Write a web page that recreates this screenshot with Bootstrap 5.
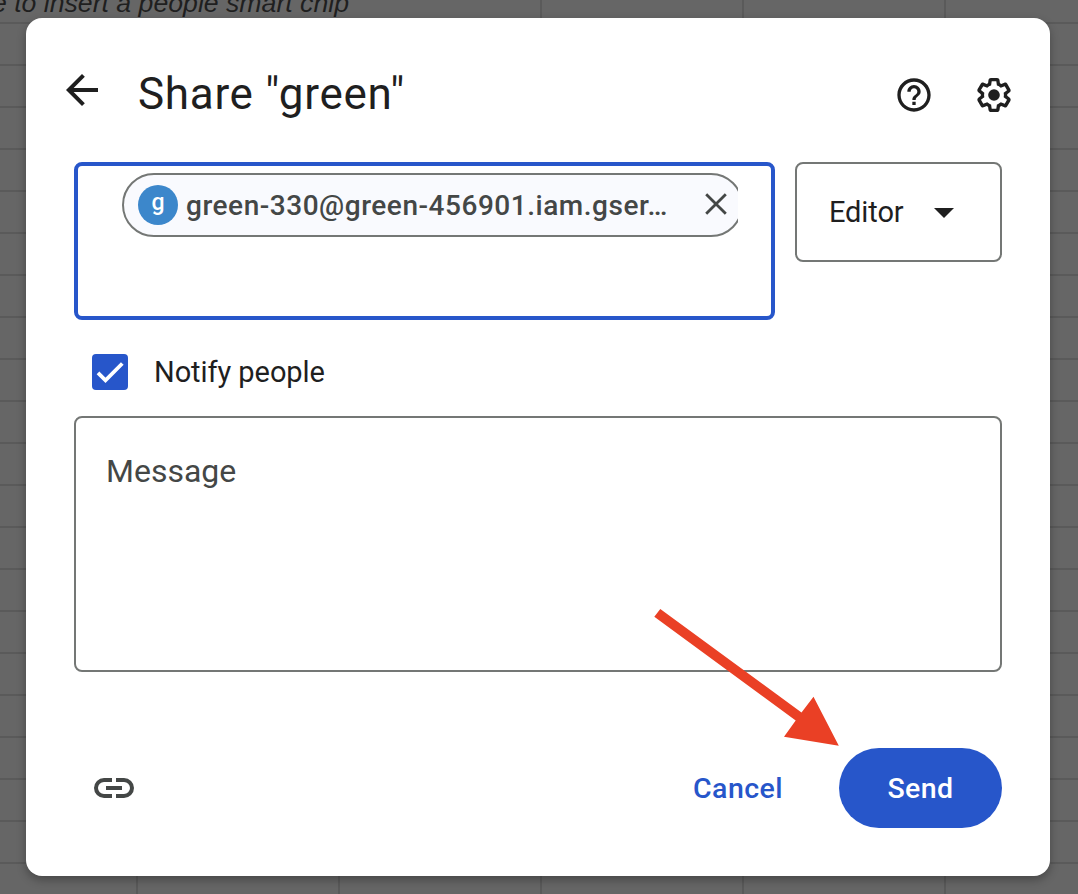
<!DOCTYPE html>
<html lang="en">
<head>
<meta charset="utf-8">
<meta name="viewport" content="width=device-width, initial-scale=1">
<title>Share "green"</title>
<link href="https://cdn.jsdelivr.net/npm/bootstrap@5.3.0/dist/css/bootstrap.min.css" rel="stylesheet">
<style>
  body { width: 1078px; height: 894px; overflow: hidden; background: #666; font-family: Roboto, "Liberation Sans", sans-serif; color: #1f1f1f; }
  svg { display: block; flex: none; }
  /* dimmed spreadsheet behind the dialog */
  .sheet {
    inset: 0;
    background-image:
      linear-gradient(#666, #666),
      linear-gradient(90deg, #5a5a5a 2px, transparent 2px),
      linear-gradient(180deg, #5a5a5a 2px, transparent 2px);
    background-size: 500px 22px, 202px 100%, 100% 42px;
    background-repeat: no-repeat, repeat, repeat;
    background-position: 0 0, 136px 0, 0 22px;
  }
  .cell-note { width: 349px; font: italic 26.67px/30px "Liberation Sans", Arial, sans-serif; color: #1f1f1f; margin-top: -12px; white-space: nowrap; }
  .share-dialog { width: 1024px; height: 858px; margin: 18px 0 0 26px; border-radius: 16px; box-shadow: 0 4px 10px rgba(0,0,0,.3); padding: 0 48px; }
  .share-head { height: 144px; margin: 0 -12px 0 -16px; }
  .share-title { font-size: 44px; line-height: 56px; font-weight: 400; letter-spacing: .7px; margin: 7px 0 0 32px; }
  .head-icons { gap: 40px; margin-top: 10px; }
  .people-box { width: 701px; height: 158px; border: 4px solid #2756ca; border-radius: 8px; padding: 7px 33px 0 44px; }
  .chip-clip { width: 616px; overflow: hidden; }
  .chip { width: 621px; height: 64px; border: 2px solid #747775; border-radius: 32px; background: #f9fafe; padding-left: 14px; color: #444746; font-size: 28px; font-weight: 500; }
  .avatar-dot { width: 40px; height: 40px; background: #3c87cb; font-size: 23px; line-height: 36px; font-weight: 500; }
  .chip-mail { margin: 2px 0 0 8px; width: 510px; letter-spacing: .53px; white-space: nowrap; }
  .role-box { width: 207px; height: 100px; border: 2px solid #747775; border-radius: 8px; padding-left: 32px; font-size: 29px; }
  .role-name { letter-spacing: -.1px; margin: 2px 30px 0 0; }
  .role-caret { margin-top: 2px; }
  .notify { height: 36px; margin: 34px 0 26px 18px; font-size: 29px; }
  .notify-text { margin: 2px 0 0 26px; letter-spacing: -.06px; }
  .tick { width: 36px; height: 36px; border-radius: 4px; background: #2756ca; }
  .message-box { height: 256px; border: 2px solid #747775; border-radius: 8px; padding: 29px 30px; font-size: 32px; line-height: 48px; color: #444746; }
  .share-foot { margin-top: 76px; height: 80px; padding-left: 16px; }
  .btn-plain { font-size: 28.5px; color: #2756ca; font-weight: 500; letter-spacing: .45px; border: 0; padding: 3px 0 0; margin-right: 56px; }
  .btn-send { width: 163px; height: 80px; background: #2756ca; color: #fff; font-size: 28.5px; font-weight: 500; letter-spacing: .4px; border: 0; padding: 2px 0 0; }
  .pointer { left: 0; top: 0; pointer-events: none; }
</style>
</head>
<body>
<div class="sheet position-absolute z-n1">
  <div class="cell-note d-flex justify-content-end"><span>e to insert a people smart chip</span></div>
</div>
<main class="share-dialog bg-white position-relative">
  <header class="share-head d-flex align-items-center">
    <svg width="48" height="48" viewBox="0 0 24 24" fill="#1f1f1f"><path d="M20 11H7.830l5.590-5.590L12 4l-8 8 8 8 1.410-1.410L7.830 13H20z"/></svg>
    <h1 class="share-title">Share "green"</h1>
    <div class="head-icons d-flex ms-auto">
      <svg width="40" height="40" viewBox="0 0 24 24" fill="#1f1f1f"><path d="M11 18h2v-2h-2v2zm1-16C6.480 2 2 6.480 2 12s4.480 10 10 10 10-4.480 10-10S17.520 2 12 2zm0 18c-4.410 0-8-3.590-8-8s3.590-8 8-8 8 3.590 8 8-3.590 8-8 8zm0-14c-2.210 0-4 1.790-4 4h2c0-1.100.9-2 2-2s2 .9 2 2c0 2-3 1.750-3 5h2c0-2.250 3-2.500 3-5 0-2.210-1.790-4-4-4z"/></svg>
      <svg width="40" height="40" viewBox="0 0 24 24" fill="#1f1f1f"><path d="M13.85 22.25h-3.7c-.74 0-1.36-.54-1.45-1.27l-.27-1.89c-.27-.14-.53-.29-.79-.46l-1.8.72c-.7.26-1.47-.03-1.81-.65L2.2 15.53c-.35-.66-.2-1.44.36-1.88l1.53-1.19c-.01-.15-.02-.3-.02-.46 0-.15.01-.31.02-.46l-1.52-1.19c-.59-.45-.74-1.26-.37-1.88l1.85-3.19c.34-.62 1.11-.9 1.79-.63l1.81.73c.26-.17.52-.32.78-.46l.27-1.910c.09-.7.71-1.250 1.440-1.250h3.7c.74 0 1.360.54 1.450 1.270l.27 1.890c.27.14.53.29.79.46l1.8-.72c.71-.26 1.480.03 1.820.65l1.840 3.180c.36.66.2 1.440-.36 1.880l-1.520 1.190c.01.15.02.3.02.46s-.01.31-.02.46l1.520 1.190c.56.45.72 1.230.37 1.860l-1.860 3.220c-.34.62-1.110.9-1.8.63l-1.8-.72c-.26.17-.52.32-.78.46l-.27 1.910c-.1.68-.72 1.220-1.460 1.220zm-3.230-2h2.760l.37-2.550.53-.22c.44-.18.88-.44 1.340-.78l.45-.34 2.380.96 1.380-2.4-2.030-1.580.07-.56c.03-.26.06-.51.06-.78s-.03-.53-.06-.78l-.07-.56 2.030-1.580-1.390-2.4-2.390.96-.45-.35c-.42-.32-.87-.58-1.330-.77l-.52-.22-.37-2.550h-2.760l-.37 2.550-.53.21c-.44.19-.88.44-1.340.79l-.45.33-2.380-.95-1.390 2.390 2.030 1.580-.07.56a7 7 0 0 0-.06.79c0 .26.02.53.06.78l.07.56-2.030 1.580 1.380 2.4 2.390-.96.45.35c.43.33.86.58 1.330.77l.53.22.38 2.550z"/><circle cx="12" cy="12" r="3.500"/></svg>
    </div>
  </header>

  <section class="d-flex justify-content-between">
    <div class="people-box">
      <div class="chip-clip">
        <div class="chip d-flex align-items-center">
          <span class="avatar-dot rounded-circle text-white text-center">g</span>
          <span class="chip-mail">green-330@green-456901.iam.gser…</span>
          <svg width="40" height="40" viewBox="0 0 40 40" stroke="#444746" stroke-width="2.800"><path d="M10.200 9.200l19.600 19.600M29.800 9.200L10.200 28.800"/></svg>
        </div>
      </div>
    </div>
    <div class="role-box d-flex align-items-center">
      <span class="role-name">Editor</span>
      <svg class="role-caret" width="20" height="10" viewBox="0 0 20 10" fill="#1f1f1f"><path d="M0 0h20L10 10z"/></svg>
    </div>
  </section>

  <div class="notify d-flex align-items-center">
    <span class="tick"><svg width="36" height="36" viewBox="0 0 36 36" fill="none" stroke="#fff" stroke-width="3.800"><path d="M6 18.800l7.500 7.500L30.300 9.500"/></svg></span>
    <span class="notify-text">Notify people</span>
  </div>

  <div class="message-box">Message</div>

  <footer class="share-foot d-flex align-items-center">
    <svg width="48" height="48" viewBox="0 0 24 24" fill="none" stroke="#444746" stroke-width="2"><path d="M11 8H7a4 4 0 0 0 0 8h4M13 8h4a4 4 0 0 1 0 8h-4M8 12h8"/></svg>
    <button class="btn btn-plain ms-auto">Cancel</button>
    <button class="btn btn-send rounded-pill">Send</button>
  </footer>
</main>
<svg class="pointer position-absolute" width="1078" height="894" fill="#ea4025"><path d="M660.300 609L801.500 712.500 813.500 696.700 838.800 745.700 784 736.700 795.700 720.500 654.300 616.800z"/></svg>
<script src="https://cdn.jsdelivr.net/npm/bootstrap@5.3.0/dist/js/bootstrap.bundle.min.js"></script>
</body>
</html>
